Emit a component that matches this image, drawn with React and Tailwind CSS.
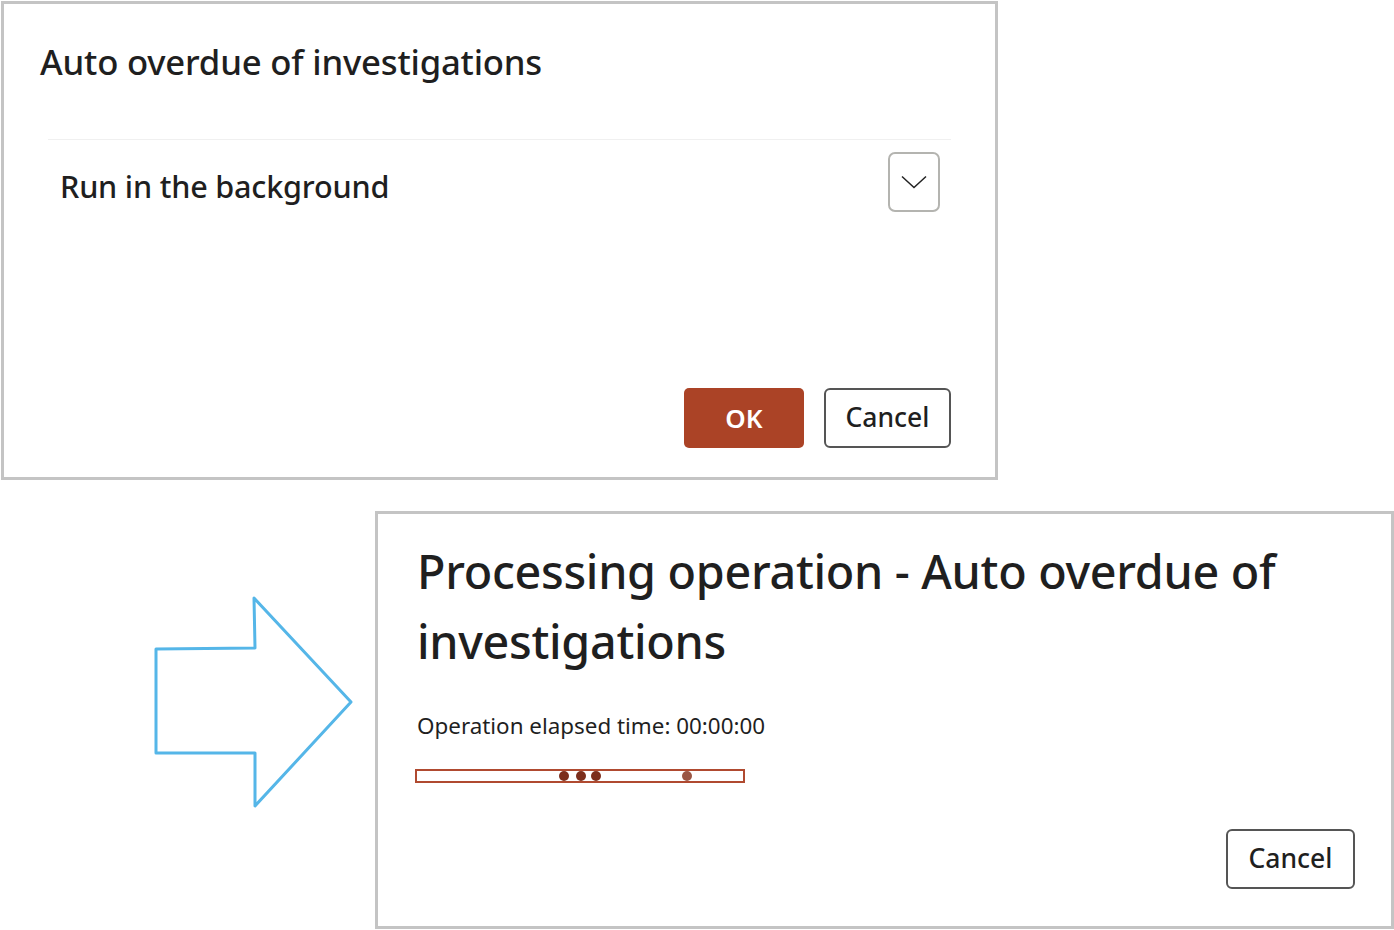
function Arrow() {
  return (
    <svg width="210" height="220" viewBox="0 0 210 220" className="shrink-0">
      <path
        d="M6 53 L105 52 L104 2 L201 106 L105 210 L105 157 L6 157 Z"
        fill="none"
        stroke="#55b6e8"
        strokeWidth="3"
        strokeLinejoin="round"
      />
    </svg>
  );
}

export default function App() {
  return (
    <div className="w-[1394px] h-[930px] bg-white text-[#1f1f1f] font-['Noto_Sans',sans-serif] overflow-hidden">
      {/* first dialog */}
      <div className="ml-[1px] mt-[1px] w-[997px] h-[479px] border-[3px] border-[#c4c4c4] flex flex-col">
        <h1 className="ml-[36px] mt-[36px] text-[34.7px] leading-[44px] font-medium tracking-[-0.2px]">
          Auto overdue of investigations
        </h1>
        <div className="mx-[44px] mt-[55px] border-t border-[#f0f0f0]" />
        <div className="flex items-start justify-between ml-[56px] mr-[55px] mt-[12px]">
          <span className="mt-[14px] text-[30.6px] leading-[40px] font-medium tracking-[-0.2px]">Run in the background</span>
          <button className="w-[52px] h-[60px] rounded-[7px] border-2 border-[#b4b4b0] flex items-center justify-center">
            <svg width="26" height="14" viewBox="0 0 26 14">
              <polyline points="1,1.5 13,12.5 25,1.5" fill="none" stroke="#222" strokeWidth="1.5" />
            </svg>
          </button>
        </div>
        <div className="mt-auto mb-[29px] mr-[44px] flex justify-end gap-[20px]">
          <button className="w-[120px] h-[60px] rounded-[5px] bg-[#ab4326] text-white text-[26px] font-semibold">
            OK
          </button>
          <button className="w-[127px] h-[60px] rounded-[6px] border-2 border-[#555] text-[26.5px] font-medium">
            Cancel
          </button>
        </div>
      </div>

      <div className="mt-[31px] flex items-start">
        <div className="ml-[150px] mt-[85px]">
          <Arrow />
        </div>
        {/* second dialog */}
        <div className="ml-[15px] w-[1019px] h-[418px] border-[3px] border-[#c4c4c4] flex flex-col">
          <h2 className="ml-[39px] mt-[22px] text-[46.7px] leading-[70px] tracking-[-0.3px] font-medium">
            Processing operation - Auto overdue of
            <br />
            investigations
          </h2>
          <p className="ml-[39px] mt-[35px] text-[22.4px] leading-[30px]">Operation elapsed time: 00:00:00</p>
          <div className="ml-[37px] mt-[28px] w-[330px] h-[14px] border-2 border-[#b04a30] relative">
            <span className="absolute top-0 left-[142px] w-[10px] h-[10px] rounded-full bg-[#7c2e1c]" />
            <span className="absolute top-0 left-[159px] w-[10px] h-[10px] rounded-full bg-[#7c2e1c]" />
            <span className="absolute top-0 left-[174px] w-[10px] h-[10px] rounded-full bg-[#7c2e1c]" />
            <span className="absolute top-0 left-[265px] w-[10px] h-[10px] rounded-full bg-[#9a5644]" />
          </div>
          <div className="mt-auto mb-[37px] mr-[36px] flex justify-end">
            <button className="w-[129px] h-[60px] rounded-[6px] border-2 border-[#555] text-[26.5px] font-medium">
              Cancel
            </button>
          </div>
        </div>
      </div>
    </div>
  );
}
